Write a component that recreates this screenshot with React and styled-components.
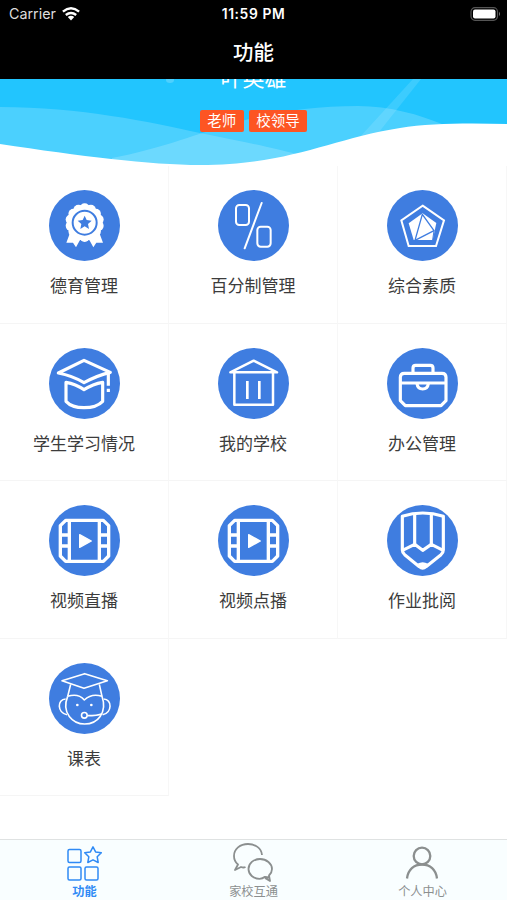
import styled, { createGlobalStyle } from "styled-components";

const GlobalStyle = createGlobalStyle`
  * {
    box-sizing: border-box;
  }
  body {
    margin: 0;
    background-color: #fff;
    font-family: "Liberation Sans", "Noto Sans CJK SC", sans-serif;
  }
`;

const Container = styled.div`
  width: 100%;
  height: 900px;
  display: flex;
  flex-direction: column;
  overflow: hidden;
  background-color: #fff;
`;

const Header = styled.header`
  height: 79px;
  flex-shrink: 0;
  background-color: #000;
  color: #fff;
`;

const StatusBar = styled.div`
  height: 27px;
  padding: 0 6px 0 9px;
  display: grid;
  grid-template-columns: 1fr auto 1fr;
  align-items: center;
  font-family: Inter, sans-serif;
`;

const Carrier = styled.div`
  display: flex;
  align-items: center;
  gap: 6px;
  font-size: 14.3px;
  color: #ddd;
`;

const Time = styled.div`
  padding-right: 3px;
  font-size: 13.8px;
  font-weight: 600;
  letter-spacing: 0.6px;
`;

const Battery = styled.svg`
  justify-self: end;
  display: block;
`;

const Title = styled.h1`
  margin: 0;
  height: 52px;
  line-height: 52px;
  font-size: 20.5px;
  font-weight: 500;
  text-align: center;
`;

const Content = styled.main`
  flex: 1;
  min-height: 0;
  overflow: hidden;
`;

const Banner = styled.section`
  position: relative;
  height: 87px;
  padding-bottom: 34px;
  display: flex;
  flex-direction: column;
  align-items: center;
  justify-content: flex-end;
  overflow: hidden;
  background-color: #22c5fe;
`;

const Waves = styled.svg`
  position: absolute;
  top: 0;
  left: 0;
`;

const Name = styled.div`
  position: relative;
  flex-shrink: 0;
  margin-bottom: 15px;
  font-size: 22px;
  line-height: 32px;
  color: #fff;
`;

const Tags = styled.div`
  position: relative;
  display: flex;
  gap: 5px;
`;

const Tag = styled.span`
  height: 22px;
  padding: 0 7.5px;
  line-height: 22px;
  font-size: 14.5px;
  color: #fff;
  background-color: #fd5523;
  border-radius: 2px;
`;

const Grid = styled.section`
  display: grid;
  grid-template-columns: repeat(3, 1fr);
  grid-auto-rows: 157.5px;
`;

const Cell = styled.div`
  padding-top: 24px;
  display: flex;
  flex-direction: column;
  align-items: center;
  border-right: 1px solid #f7f7f7;
  border-bottom: 1px solid #f5f5f5;
`;

const Icon = styled.svg`
  width: 71px;
  height: 71px;
  flex-shrink: 0;
  fill: none;
  stroke: #fff;
  stroke-width: ${(props) => props.$stroke};
  stroke-linejoin: round;
`;

const Label = styled.div`
  margin-top: 13px;
  font-size: 17px;
  line-height: 25px;
  color: #3c3c3c;
`;

const TabBar = styled.nav`
  height: 61px;
  flex-shrink: 0;
  display: grid;
  grid-template-columns: repeat(3, 1fr);
  background-color: #f9feff;
  border-top: 1px solid #dfe2e2;
`;

const Tab = styled.a`
  display: flex;
  flex-direction: column;
  align-items: center;
  font-size: 12.2px;
  line-height: 16px;
  font-weight: ${(props) => (props.$active ? 700 : 400)};
  color: ${(props) => (props.$active ? "#2f8af5" : "#8b8f8f")};
`;

const TabIcon = styled.svg`
  width: 44px;
  height: 44px;
  display: block;
  fill: none;
  stroke: currentColor;
  stroke-width: ${(props) => props.$stroke};
  stroke-linejoin: round;
`;

const BLUE = "#3f7de0";

// scalloped edge of the medal
const petals = Array.from({ length: 14 }, (_, i) => {
  const a = (i * Math.PI * 2) / 14 - Math.PI / 2;
  return [107 + Math.cos(a) * 43, 98 + Math.sin(a) * 43];
});

const Medal = () => (
  <g fill="#fff" stroke="none">
    {petals.map(([x, y]) => (
      <circle key={`${x}-${y}`} cx={x} cy={y} r="15" />
    ))}
    <circle cx="107" cy="98" r="53" />
    <path d="M64 126 L52 158 L72 158 L81 172 L95 146 H119 L133 172 L142 158 L162 158 L150 126Z" />
    <circle cx="107" cy="98" r="36" stroke={BLUE} strokeWidth="6" />
    <path
      fill={BLUE}
      d="M107 77 L113 90 L128 92 L117 102 L120 117 L107 109 L94 117 L97 102 L86 92 L101 90Z"
    />
  </g>
);

const Percent = () => (
  <>
    <rect x="54" y="45" width="39" height="60" rx="10" />
    <rect x="118" y="110" width="40" height="60" rx="10" />
    <path d="M131 39 L80 175" strokeLinecap="round" />
  </>
);

const Pentagon = () => (
  <>
    <path d="M107 47 L171 91 L147 168 H65 L43 91Z" strokeLinejoin="miter" />
    <path fill="#fff" stroke="none" d="M107 70 L148 99 L137 150 H80 L65 100Z" />
    <path stroke={BLUE} strokeWidth="4" d="M106 73 L141 122 L84 151Z" />
    <path stroke={BLUE} strokeWidth="3" d="M141 122 L137 150" />
  </>
);

const Cap = () => (
  <>
    <path d="M105 37 L184 73 Q145 82 105 104 Q70 83 28 75Z" />
    <path d="M178 78 V113 M178 122 V132" />
    <path d="M51 103 Q80 108 105 125 Q132 108 161 103 V160 Q143 179 105 179 Q68 179 51 160Z" />
  </>
);

const School = () => (
  <>
    <path d="M37 73 L107 38 L177 73Z" />
    <path d="M49 73 V170 H165 V73" />
    <path d="M88 99 V153 M124 99 V153" strokeWidth="8" />
  </>
);

const Briefcase = () => (
  <>
    <path d="M52 76 H165 Q177 76 177 88 V158 L162 173 H55 L40 158 V88 Q40 76 52 76Z" />
    <path d="M40 105 H177" />
    <path d="M78 75 V60 Q78 52 86 52 H130 Q138 52 138 60 V75" />
    <path d="M90 107 Q92 123 107 123 Q122 123 124 107" />
  </>
);

const Film = () => (
  <>
    <path d="M50 46 H163 L179 62 V153 L163 169 H50 L34 153 V62Z" />
    <path d="M61 46 V169 M151 46 V169" />
    <path d="M34 90 H61 M34 123 H61 M151 90 H179 M151 123 H179" />
    <path
      fill="#fff"
      strokeWidth="4"
      d="M92 89 L127 108 L92 127Z"
    />
  </>
);

const Pencil = () => (
  <>
    <path d="M46 34 Q107 14 169 34 V135 Q169 143 162 149 L117 185 Q107 194 97 185 L53 149 Q46 143 46 135Z" />
    <path d="M83 26 V118 M133 26 V118" />
    <path d="M45 137 L83 118 L107 136 L133 118 L170 137" />
    <path fill="#fff" stroke="none" d="M91 176 Q107 167 123 176 L107 192Z" />
  </>
);

const Monkey = () => (
  <>
    <path d="M39 53 L107 32 L175 53 L105 76Z" />
    <path d="M65 64 L56 100 M151 64 L159 100" />
    <path d="M56 100 Q88 90 106 111 Q128 90 159 100" />
    <path d="M56 100 C36 150 72 183 107 183 C145 183 176 150 159 100" />
    <path d="M50 108 C24 108 24 150 54 155 M164 108 C190 108 190 150 161 155" />
    <circle cx="106" cy="157" r="8.5" />
    <path d="M115 158 Q145 158 160 152" />
    <circle cx="85" cy="126" r="4" fill="#fff" stroke="none" />
    <circle cx="127" cy="126" r="4" fill="#fff" stroke="none" />
  </>
);

const items = [
  { label: "德育管理", Art: Medal, stroke: 5 },
  { label: "百分制管理", Art: Percent, stroke: 6 },
  { label: "综合素质", Art: Pentagon, stroke: 6 },
  { label: "学生学习情况", Art: Cap, stroke: 9.5 },
  { label: "我的学校", Art: School, stroke: 7.5 },
  { label: "办公管理", Art: Briefcase, stroke: 9.5 },
  { label: "视频直播", Art: Film, stroke: 10 },
  { label: "视频点播", Art: Film, stroke: 10 },
  { label: "作业批阅", Art: Pencil, stroke: 9.5 },
  { label: "课表", Art: Monkey, stroke: 4.8 },
];

const App = () => {
  return (
    <Container>
      <GlobalStyle />
      <Header>
        <StatusBar>
          <Carrier>
            Carrier
            <svg width="18" height="14" viewBox="0 0 18 14" fill="none" stroke="#fff" strokeWidth="2.4">
              <path d="M0.9 4.6 Q9 -2 17.1 4.6" />
              <path d="M3.8 8 Q9 3.8 14.2 8" />
              <path d="M9 13.4 L5.8 10 Q9 7.4 12.2 10Z" fill="#fff" stroke="none" />
            </svg>
          </Carrier>
          <Time>11:59 PM</Time>
          <Battery width="31" height="14" viewBox="0 0 31 14">
            <rect x="1" y="0.7" width="26.5" height="12.6" rx="4" fill="none" stroke="#555" strokeWidth="1.2" />
            <rect x="3" y="2.5" width="22.5" height="9" rx="2" fill="#fff" />
            <path d="M29 4.8 Q31 7 29 9.2Z" fill="#777" />
          </Battery>
        </StatusBar>
        <Title>功能</Title>
      </Header>
      <Content>
        <Banner>
          <Waves width="507" height="87" viewBox="0 0 507 87">
            <g fill="#fff">
              <path opacity="0.19" d="M0 28 C80 28 150 43 200 54 C240 62 275 69 296 75 V87 H0Z" />
              <path opacity="0.19" d="M112 79 C160 70 190 57 225 47 C265 34 310 27 358 27 C390 27 420 36 442 45 V87 H112Z" />
              <path opacity="0.12" d="M413 0 H421 L375 58 H360Z" />
              <ellipse opacity="0.2" cx="170" cy="1" rx="4" ry="3" />
              <path d="M0 65 C80 77 150 86 200 86 C290 86 330 60 400 49 C430 44 470 44 507 45 V87 H0Z" />
            </g>
          </Waves>
          <Name>叶英雄</Name>
          <Tags>
            <Tag>老师</Tag>
            <Tag>校领导</Tag>
          </Tags>
        </Banner>
        <Grid>
          {items.map(({ label, Art, stroke }) => (
            <Cell key={label}>
              <Icon viewBox="0 0 213 213" $stroke={stroke}>
                <circle cx="106.5" cy="106.5" r="106.5" fill={BLUE} stroke="none" />
                <Art />
              </Icon>
              <Label>{label}</Label>
            </Cell>
          ))}
        </Grid>
      </Content>
      <TabBar>
        <Tab $active>
          <TabIcon viewBox="1 0.5 44 44" $stroke={1.5}>
            <rect x="6" y="10" width="13" height="13" rx="1.5" />
            <rect x="6" y="27.5" width="13" height="13" rx="1.5" />
            <rect x="23" y="27.5" width="13" height="13" rx="1.5" />
            <path d="M31 7.3 L33.6 12.4 L39.3 13.3 L35.2 17.3 L36.2 23 L31 20.3 L25.8 23 L26.8 17.3 L22.7 13.3 L28.4 12.4Z" />
          </TabIcon>
          功能
        </Tab>
        <Tab>
          <TabIcon viewBox="1.5 0 44 44" $stroke={1.8}>
            <path d="M31.5 15 C31 8 24.5 4 17.5 4 C9.5 4 3.5 9 3.5 16 C3.5 19.5 5 22.5 7.5 24.5 L4.5 30 L10.5 27 Q13 28 15 27" />
            <path d="M38.5 37.5 L34.5 36.8 C33 38 31 38.8 29 38.8 C23 38.8 18 34.5 18 29 C18 23.5 23 19 29.5 19 C36 19 41.5 23.5 41.5 29 C41.5 31.5 40 34 38.5 35.5 L39.5 41 L34.5 38" />
          </TabIcon>
          家校互通
        </Tab>
        <Tab>
          <TabIcon viewBox="1 0 44 44" $stroke={2.3}>
            <circle cx="22" cy="16" r="8.3" />
            <path d="M7 38.5 C8 29.5 14 24.5 22 24.5 C30 24.5 36 29.5 37 38.5" />
          </TabIcon>
          个人中心
        </Tab>
      </TabBar>
    </Container>
  );
};

export default App;
